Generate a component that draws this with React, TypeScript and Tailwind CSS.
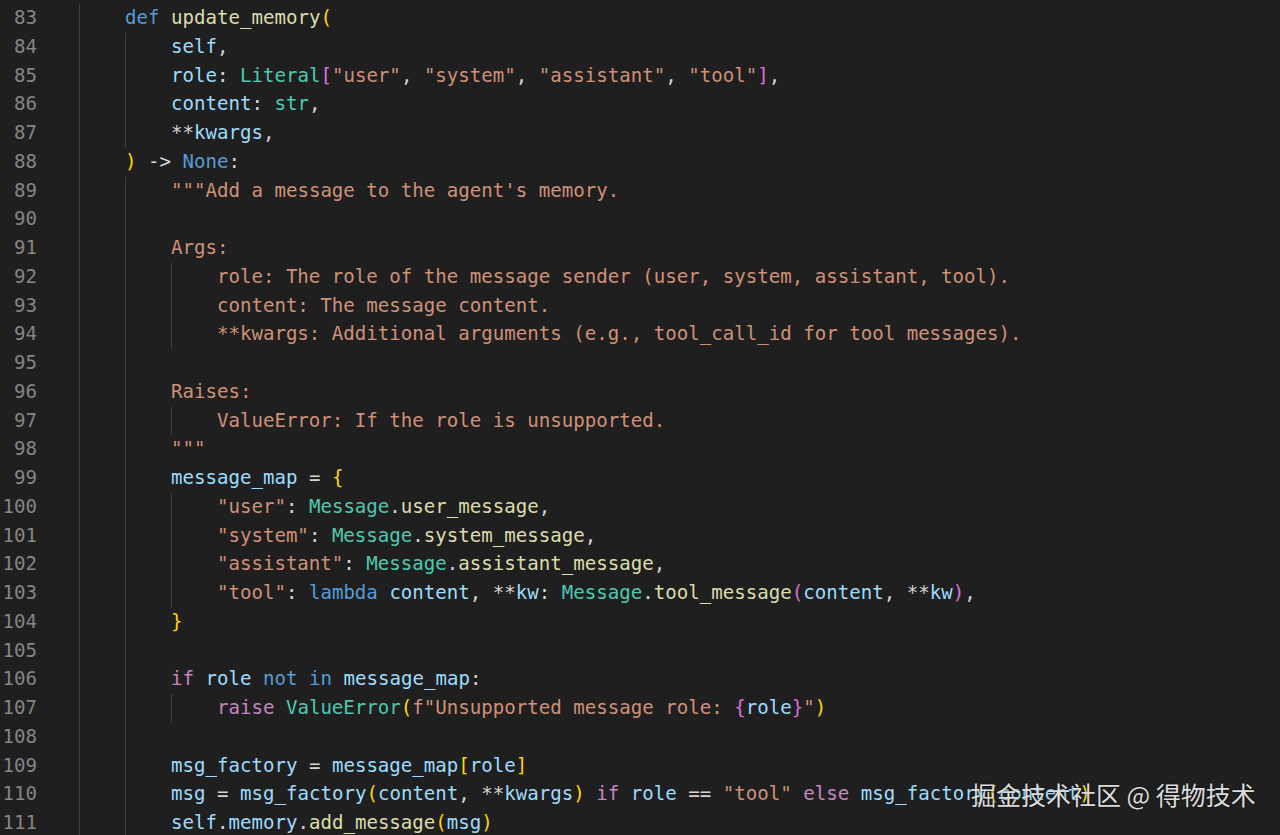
import React from "react";

const C: Record<string, string> = {
  k: "text-[#569cd6]",
  c: "text-[#c586c0]",
  f: "text-[#dcdcaa]",
  v: "text-[#9cdcfe]",
  t: "text-[#4ec9b0]",
  s: "text-[#ce9178]",
  p: "text-[#d4d4d4]",
  y: "text-[#ffd700]",
  m: "text-[#da70d6]",
};

type Tok = [string, string];
type Line = { n: number; g: number; ind: number; toks: Tok[] };

const L = (n: number, g: number, ind: number, toks: Tok[] = []): Line => ({ n, g, ind, toks });

const lines: Line[] = [
  L(83, 1, 4, [["def", "k"], [" ", "p"], ["update_memory", "f"], ["(", "y"]]),
  L(84, 2, 8, [["self", "v"], [",", "p"]]),
  L(85, 2, 8, [
    ["role", "v"], [": ", "p"], ["Literal", "t"], ["[", "m"],
    ['"user"', "s"], [", ", "p"], ['"system"', "s"], [", ", "p"],
    ['"assistant"', "s"], [", ", "p"], ['"tool"', "s"], ["]", "m"], [",", "p"],
  ]),
  L(86, 2, 8, [["content", "v"], [": ", "p"], ["str", "t"], [",", "p"]]),
  L(87, 2, 8, [["**", "p"], ["kwargs", "v"], [",", "p"]]),
  L(88, 1, 4, [[")", "y"], [" -> ", "p"], ["None", "k"], [":", "p"]]),
  L(89, 2, 8, [['"""Add a message to the agent\'s memory.', "s"]]),
  L(90, 2, 8),
  L(91, 2, 8, [["Args:", "s"]]),
  L(92, 3, 12, [["role: The role of the message sender (user, system, assistant, tool).", "s"]]),
  L(93, 3, 12, [["content: The message content.", "s"]]),
  L(94, 3, 12, [["**kwargs: Additional arguments (e.g., tool_call_id for tool messages).", "s"]]),
  L(95, 2, 8),
  L(96, 2, 8, [["Raises:", "s"]]),
  L(97, 3, 12, [["ValueError: If the role is unsupported.", "s"]]),
  L(98, 2, 8, [['"""', "s"]]),
  L(99, 2, 8, [["message_map", "v"], [" = ", "p"], ["{", "y"]]),
  L(100, 3, 12, [['"user"', "s"], [": ", "p"], ["Message", "t"], [".", "p"], ["user_message", "f"], [",", "p"]]),
  L(101, 3, 12, [['"system"', "s"], [": ", "p"], ["Message", "t"], [".", "p"], ["system_message", "f"], [",", "p"]]),
  L(102, 3, 12, [['"assistant"', "s"], [": ", "p"], ["Message", "t"], [".", "p"], ["assistant_message", "f"], [",", "p"]]),
  L(103, 3, 12, [
    ['"tool"', "s"], [": ", "p"], ["lambda", "k"], [" ", "p"], ["content", "v"], [", ", "p"],
    ["**", "p"], ["kw", "v"], [": ", "p"], ["Message", "t"], [".", "p"], ["tool_message", "f"],
    ["(", "m"], ["content", "v"], [", ", "p"], ["**", "p"], ["kw", "v"], [")", "m"], [",", "p"],
  ]),
  L(104, 2, 8, [["}", "y"]]),
  L(105, 2, 8),
  L(106, 2, 8, [
    ["if", "c"], [" ", "p"], ["role", "v"], [" ", "p"], ["not", "k"], [" ", "p"], ["in", "k"],
    [" ", "p"], ["message_map", "v"], [":", "p"],
  ]),
  L(107, 3, 12, [
    ["raise", "c"], [" ", "p"], ["ValueError", "t"], ["(", "y"], ["f", "s"],
    ['"Unsupported message role: ', "s"], ["{", "m"], ["role", "v"], ["}", "m"], ['"', "s"], [")", "y"],
  ]),
  L(108, 2, 8),
  L(109, 2, 8, [["msg_factory", "v"], [" = ", "p"], ["message_map", "v"], ["[", "y"], ["role", "v"], ["]", "y"]]),
  L(110, 2, 8, [
    ["msg", "v"], [" = ", "p"], ["msg_factory", "v"], ["(", "y"], ["content", "v"], [", ", "p"],
    ["**", "p"], ["kwargs", "v"], [")", "y"], [" ", "p"], ["if", "c"], [" ", "p"], ["role", "v"],
    [" == ", "p"], ['"tool"', "s"], [" ", "p"], ["else", "c"], [" ", "p"], ["msg_factory", "v"],
    ["(", "y"], ["content", "v"], [")", "y"],
  ]),
  L(111, 2, 8, [
    ["self", "v"], [".", "p"], ["memory", "v"], [".", "p"], ["add_message", "f"], ["(", "y"], ["msg", "v"], [")", "y"],
  ]),
];

export default function App() {
  return (
    <div
      className="relative w-[1280px] h-[835px] overflow-hidden bg-[#1f1f1f] pt-[4px]"
      style={{ fontFamily: '"DejaVu Sans Mono", "Liberation Mono", monospace' }}
    >
      {lines.map((ln) => (
        <div key={ln.n} className="flex h-[28.75px] text-[19.1px] leading-[28.75px] whitespace-pre">
          <div className="w-[37px] shrink-0 text-right text-[#858585]">{ln.n}</div>
          <div className="w-[42px] shrink-0" />
          <div className="flex">
            {Array.from({ length: ln.g }).map((_, i) => (
              <span key={i} className="inline-block w-[4ch] h-[28.75px] border-l border-[#404040]" />
            ))}
            <span>{" ".repeat(Math.max(0, ln.ind - ln.g * 4))}</span>
            {ln.toks.map((t, i) => (
              <span key={i} className={C[t[1]]}>
                {t[0]}
              </span>
            ))}
          </div>
        </div>
      ))}
      <div
        className="absolute left-[971px] top-[779px] text-[25px] leading-[30px] text-[#dcdcdc] whitespace-nowrap [text-shadow:0_0_2px_rgba(0,0,0,0.6)]"
        style={{ fontFamily: '"Noto Sans CJK SC", "Noto Sans", sans-serif' }}
      >
        掘金技术社区 @ 得物技术
      </div>
    </div>
  );
}
